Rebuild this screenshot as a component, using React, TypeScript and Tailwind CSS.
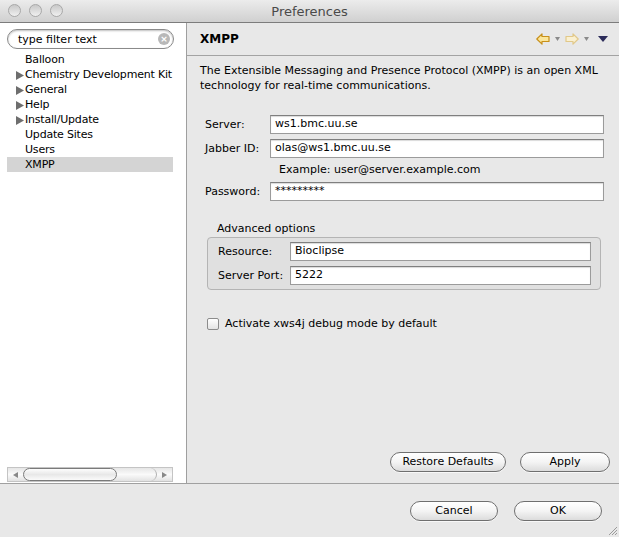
import React from "react";

const F = { fontFamily: '"DejaVu Sans", "Liberation Sans", sans-serif' };

function Btn({ label, w }: { label: string; w: string }) {
  return (
    <div
      className={`${w} h-[20px] rounded-full border border-[#6f6f6f] bg-gradient-to-b from-white via-[#f4f4f4] to-[#dcdcdc] flex items-center justify-center text-[11px] text-black shadow-[0_1px_0_rgba(255,255,255,0.7)]`}
    >
      {label}
    </div>
  );
}

function Input({ value }: { value: string }) {
  return (
    <div className="h-[19px] bg-white border border-[#9b9b9b] border-t-[#7f7f7f] shadow-[inset_0_1px_1px_rgba(0,0,0,0.15)] flex items-center pl-[4px] text-[11px] text-black">
      {value}
    </div>
  );
}

function Tri() {
  return (
    <svg width="8" height="9" viewBox="0 0 8 9" className="shrink-0">
      <path d="M0 0 L8 4.5 L0 9 Z" fill="#6e6e6e" />
    </svg>
  );
}

export default function App() {
  const items = [
    { t: "Balloon", c: false },
    { t: "Chemistry Development Kit", c: true },
    { t: "General", c: true },
    { t: "Help", c: true },
    { t: "Install/Update", c: true },
    { t: "Update Sites", c: false },
    { t: "Users", c: false },
    { t: "XMPP", c: false, sel: true },
  ];
  return (
    <div style={F} className="w-[619px] h-[537px] bg-[#e8e8e8] flex flex-col overflow-hidden text-black">
      {/* title bar */}
      <div className="h-[23px] shrink-0 bg-gradient-to-b from-[#ececec] to-[#d0d0d0] border-b border-[#7c7c7c] relative flex items-center justify-center">
        <div className="absolute left-[8px] top-[4px] flex gap-[8px]">
          {[0, 1, 2].map((i) => (
            <div
              key={i}
              className="w-[13px] h-[13px] rounded-full border border-[#a8a8a8] bg-gradient-to-b from-[#c8c8c8] to-[#f0f0f0]"
            />
          ))}
        </div>
        <span className="text-[13px] text-[#4a4a4a] leading-none">Preferences</span>
      </div>

      {/* main */}
      <div className="flex h-[461px] shrink-0 border-b border-[#a0a0a0]">
        {/* left */}
        <div className="w-[187px] shrink-0 bg-white border-r border-[#9f9f9f] flex flex-col">
          <div className="mt-[6px] ml-[7px] w-[167px] h-[20px] rounded-full border border-[#8a8a8a] shadow-[inset_0_1px_2px_rgba(0,0,0,0.25)] flex items-center pl-[10px] pr-[3px] pt-[2px] text-[11px]">
            <span className="flex-1">type filter text</span>
            <div className="w-[12px] h-[12px] -mt-[2px] rounded-full bg-[#b8b8b8] flex items-center justify-center text-white text-[9px] leading-none font-bold">
              ×
            </div>
          </div>
          <div className="mt-[3px] flex flex-col">
            {items.map((it) => (
              <div
                key={it.t}
                className={`ml-[7px] w-[166px] h-[15px] flex items-center text-[11px] tracking-[-0.2px] whitespace-nowrap pt-[1px] ${it.sel ? "bg-[#d4d4d4]" : ""}`}
              >
                <div className="w-[18px] shrink-0 pl-[9px] flex items-center">{it.c ? <Tri /> : null}</div>
                <span>{it.t}</span>
              </div>
            ))}
          </div>
          <div className="flex-1" />
          {/* scrollbar */}
          <div className="mb-[1px] ml-[7px] w-[166px] h-[15px] bg-gradient-to-b from-[#e6e6e6] via-[#fafafa] to-[#e2e2e2] border border-[#c4c4c4] flex items-center">
            <div className="w-[15px] flex justify-center">
              <svg width="5" height="6" viewBox="0 0 5 6"><path d="M5 0 L0 3 L5 6Z" fill="#888" /></svg>
            </div>
            <div className="w-[94px] h-[13px] rounded-full border border-[#7a7a7a] bg-gradient-to-b from-[#fdfdfd] via-[#e8e8e8] to-[#fafafa]" />
            <div className="flex-1 h-[13px] rounded-r-full border-r border-[#b0b0b0]" />
            <div className="w-[15px] flex justify-center">
              <svg width="5" height="6" viewBox="0 0 5 6"><path d="M0 0 L5 3 L0 6Z" fill="#888" /></svg>
            </div>
          </div>
        </div>

        {/* right */}
        <div className="flex-1 flex flex-col">
          <div className="h-[33px] shrink-0 border-b border-[#a3a3a3] flex items-center pl-[13px] pr-[11px]">
            <span className="text-[12px] font-bold flex-1">XMPP</span>
            <div className="flex items-center">
              <svg width="14" height="12" viewBox="0 0 14 12">
                <path d="M0.8 6 L6 0.8 L6 3.5 L13 3.5 L13 8.5 L6 8.5 L6 11.2 Z" fill="#fbe69a" stroke="#c8901a" strokeWidth="1.2" strokeLinejoin="round" />
              </svg>
              <svg width="5" height="4" viewBox="0 0 5 4" className="ml-[5px] mr-[5px]"><path d="M0 0H5L2.5 4Z" fill="#8a8a8a" /></svg>
              <svg width="14" height="12" viewBox="0 0 14 12">
                <path d="M13.2 6 L8 0.8 L8 3.5 L1 3.5 L1 8.5 L8 8.5 L8 11.2 Z" fill="#faf0d0" stroke="#e1c889" strokeWidth="1.2" strokeLinejoin="round" />
              </svg>
              <svg width="5" height="4" viewBox="0 0 5 4" className="ml-[5px] mr-[9px]"><path d="M0 0H5L2.5 4Z" fill="#8a8a8a" /></svg>
              <svg width="10" height="6" viewBox="0 0 10 6"><path d="M0 0H10L5 6Z" fill="#2c2c5a" /></svg>
            </div>
          </div>

          <div className="pl-[13px] pr-[15px] pt-[7px] text-[11px] leading-[15px]">
            The Extensible Messaging and Presence Protocol (XMPP) is an open XML technology for real-time communications.
          </div>

          <div className="mt-[22px] ml-[18px] mr-[15px] flex flex-col text-[11px]">
            <div className="flex items-center gap-0">
              <span className="w-[65px] pt-[1px]">Server:</span>
              <div className="flex-1"><Input value="ws1.bmc.uu.se" /></div>
            </div>
            <div className="flex items-center mt-[5px]">
              <span className="w-[65px] pt-[1px]">Jabber ID:</span>
              <div className="flex-1"><Input value="olas@ws1.bmc.uu.se" /></div>
            </div>
            <div className="h-[24px] flex items-center pl-[74px]">Example: user@server.example.com</div>
            <div className="flex items-center">
              <span className="w-[65px] pt-[1px]">Password:</span>
              <div className="flex-1"><Input value="*********" /></div>
            </div>
          </div>

          <div className="mt-[21px] ml-[30px] text-[11px] leading-[13px]">Advanced options</div>
          <div className="mt-[2px] ml-[20px] mr-[18px] h-[53px] rounded-[4px] border border-[#b4b4b4] bg-[#e0e0e0] pt-[4px] pl-[10px] pr-[9px] flex flex-col gap-[5px] text-[11px]">
            <div className="flex items-center">
              <span className="w-[72px] pt-[1px]">Resource:</span>
              <div className="flex-1"><Input value="Bioclipse" /></div>
            </div>
            <div className="flex items-center">
              <span className="w-[72px] pt-[1px]">Server Port:</span>
              <div className="flex-1"><Input value="5222" /></div>
            </div>
          </div>

          <div className="mt-[26px] ml-[20px] flex items-center text-[11px]">
            <div className="w-[12px] h-[12px] rounded-[2px] border border-[#8c8c8c] bg-gradient-to-b from-white to-[#e4e4e4]" />
            <span className="ml-[6px]">Activate xws4j debug mode by default</span>
          </div>

          <div className="flex-1" />
          <div className="flex justify-end gap-[14px] pr-[9px] pb-[11px]">
            <Btn label="Restore Defaults" w="w-[116px]" />
            <Btn label="Apply" w="w-[90px]" />
          </div>
        </div>
      </div>

      {/* bottom bar */}
      <div className="flex-1 relative flex justify-end items-start pt-[17px] pr-[17px] gap-[16px]">
        <Btn label="Cancel" w="w-[88px]" />
        <Btn label="OK" w="w-[88px]" />
        <svg width="11" height="11" viewBox="0 0 11 11" className="absolute right-[1px] bottom-[1px]">
          <path d="M10 2 L2 10 M10 5 L5 10 M10 8 L8 10" stroke="#9a9a9a" strokeWidth="1" />
        </svg>
      </div>
    </div>
  );
}
